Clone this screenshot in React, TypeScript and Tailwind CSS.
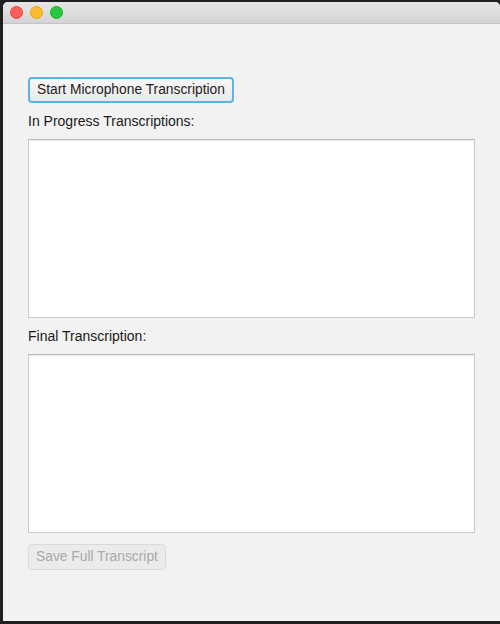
export default function App() {
  return (
    <div className="w-[500px] h-[624px] bg-[#1f2024] pl-[3px] pt-[2px] pb-[3px] overflow-hidden" style={{ fontFamily: '"Liberation Sans", Arial, sans-serif' }}>
      <div className="h-full flex flex-col rounded-t-[5px] overflow-hidden bg-[#f2f2f2]">
        <div className="h-[22px] shrink-0 flex items-center gap-[7px] pl-[7px] bg-gradient-to-b from-[#e6e6e6] to-[#d4d4d4] border-b border-[#c4c4c4]">
          <span className="w-[13px] h-[13px] rounded-full bg-[#fc5f57] border border-[#e2463f]" />
          <span className="w-[13px] h-[13px] rounded-full bg-[#fdbc2e] border border-[#e1a116]" />
          <span className="w-[13px] h-[13px] rounded-full bg-[#28c840] border border-[#1aab29]" />
        </div>
        <div className="flex-1 flex flex-col items-start pl-[25px] pr-[25px] text-[14px] text-[#1a1a1a]">
          <button className="mt-[53px] h-[26px] px-[7px] rounded-[4px] bg-gradient-to-b from-[#f7f7f7] to-[#e9e9e9] border-2 border-[#5bb3e8] text-[13.8px] text-[#222]">
            Start Microphone Transcription
          </button>
          <div className="mt-[10px] leading-[16px]">In Progress Transcriptions:</div>
          <div className="mt-[10px] w-full h-[179px] bg-white border border-[#c9c9c9] border-t-[#b8b8b8] shadow-[inset_0_1px_1px_rgba(0,0,0,0.08)]" />
          <div className="mt-[10px] leading-[16px]">Final Transcription:</div>
          <div className="mt-[10px] w-full h-[179px] bg-white border border-[#c9c9c9] border-t-[#b8b8b8] shadow-[inset_0_1px_1px_rgba(0,0,0,0.08)]" />
          <button disabled className="mt-[11px] h-[26px] px-[7px] rounded-[4px] bg-[#ebebeb] border border-[#dadada] text-[13.8px] text-[#a9a9a9]">
            Save Full Transcript
          </button>
        </div>
      </div>
    </div>
  );
}
